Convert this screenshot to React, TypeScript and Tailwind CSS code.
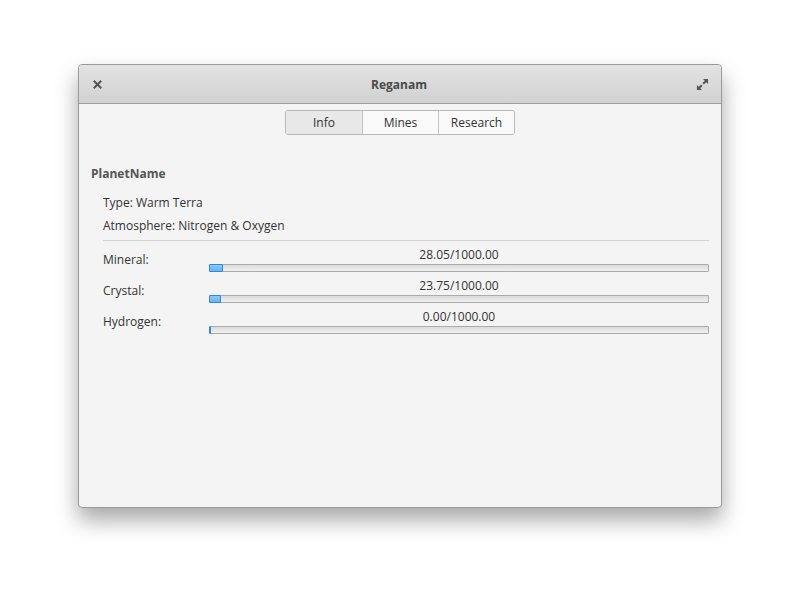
import { useState } from 'react';

const resources = [
    { name: 'Mineral', value: 28.05, max: 1000 },
    { name: 'Crystal', value: 23.75, max: 1000 },
    { name: 'Hydrogen', value: 0, max: 1000 },
];

function App() {
    const [tab, setTab] = useState('Info');

    return (
        <div className="w-[800px] h-[600px] bg-white pt-[64px] pl-[78px] font-['Open_Sans',sans-serif] text-[12px] text-[#333]">
            <div className="w-[644px] h-[444px] flex flex-col bg-[#f4f4f4] border border-[#9a9a9a] rounded-[4px] overflow-hidden shadow-[0_12px_22px_rgba(0,0,0,0.35)]">
                {/* Header bar */}
                <div className="h-[39px] shrink-0 flex items-center justify-between px-[13px] pt-[1px] bg-gradient-to-b from-[#e3e3e3] to-[#d1d1d1] border-b border-[#9e9e9e]">
                    <svg width="9" height="9" viewBox="0 0 9 9" className="ml-[1px]">
                        <path d="M1.5 1.5 L7.5 7.5 M7.5 1.5 L1.5 7.5" stroke="#555" strokeWidth="2" strokeLinecap="square" />
                    </svg>
                    <span className="font-bold text-[#4a4a4a]">Reganam</span>
                    <svg width="13" height="13" viewBox="0 0 14 14" className="mr-[-1px]">
                        <path d="M7.5 1 H13 V6.5 L11 4.5 L8.5 7 L7 5.5 L9.5 3 Z" fill="#555" />
                        <path d="M6.5 13 H1 V7.5 L3 9.5 L5.5 7 L7 8.5 L4.5 11 Z" fill="#555" />
                    </svg>
                </div>

                {/* Tabs */}
                <div className="flex justify-center mt-[6px]">
                    <div className="flex h-[25px] border border-[#b9b9b9] rounded-[3px] overflow-hidden bg-[#f7f7f7]">
                        {['Info', 'Mines', 'Research'].map((t, i) => (
                            <button
                                key={t}
                                onClick={() => setTab(t)}
                                className={`w-[76px] flex items-center justify-center text-[#333] ${i > 0 ? 'border-l border-[#c4c4c4]' : ''} ${tab === t ? 'bg-[#e8e8e8]' : 'bg-[#f9f9f9]'}`}
                            >
                                {t}
                            </button>
                        ))}
                    </div>
                </div>

                {/* Planet info */}
                <div className="px-[12px] mt-[30px]">
                    <div className="font-bold text-[#555] leading-[18px]">PlanetName</div>
                    <div className="pl-[12px] mt-[11px]">
                        <div className="leading-[18px]">Type: Warm Terra</div>
                        <div className="leading-[18px] mt-[5px]">Atmosphere: Nitrogen &amp; Oxygen</div>
                        <div className="h-px bg-[#d4d4d4] mt-[5px]" />
                        <div className="flex flex-col gap-[6px] mt-[6px]">
                            {resources.map((r) => (
                                <div key={r.name} className="flex items-start">
                                    <div className="w-[106px] leading-[18px] mt-[4px]">{r.name}:</div>
                                    <div className="flex-1 flex flex-col">
                                        <div className="text-center leading-[16px] mb-[1px]">
                                            {r.value.toFixed(2)}/{r.max.toFixed(2)}
                                        </div>
                                        <div className="h-[8px] border border-[#ababab] rounded-[1px] bg-gradient-to-b from-[#dcdcdc] to-[#f0f0f0] flex">
                                            <div
                                                className="-m-px h-[8px] bg-gradient-to-b from-[#8fc8f7] to-[#6cb3f2] border border-[#2f88e0] rounded-[1px] min-w-[2px]"
                                                style={{ width: `${(r.value / r.max) * 100}%` }}
                                            />
                                        </div>
                                    </div>
                                </div>
                            ))}
                        </div>
                    </div>
                </div>
            </div>
        </div>
    );
}

export default App;
